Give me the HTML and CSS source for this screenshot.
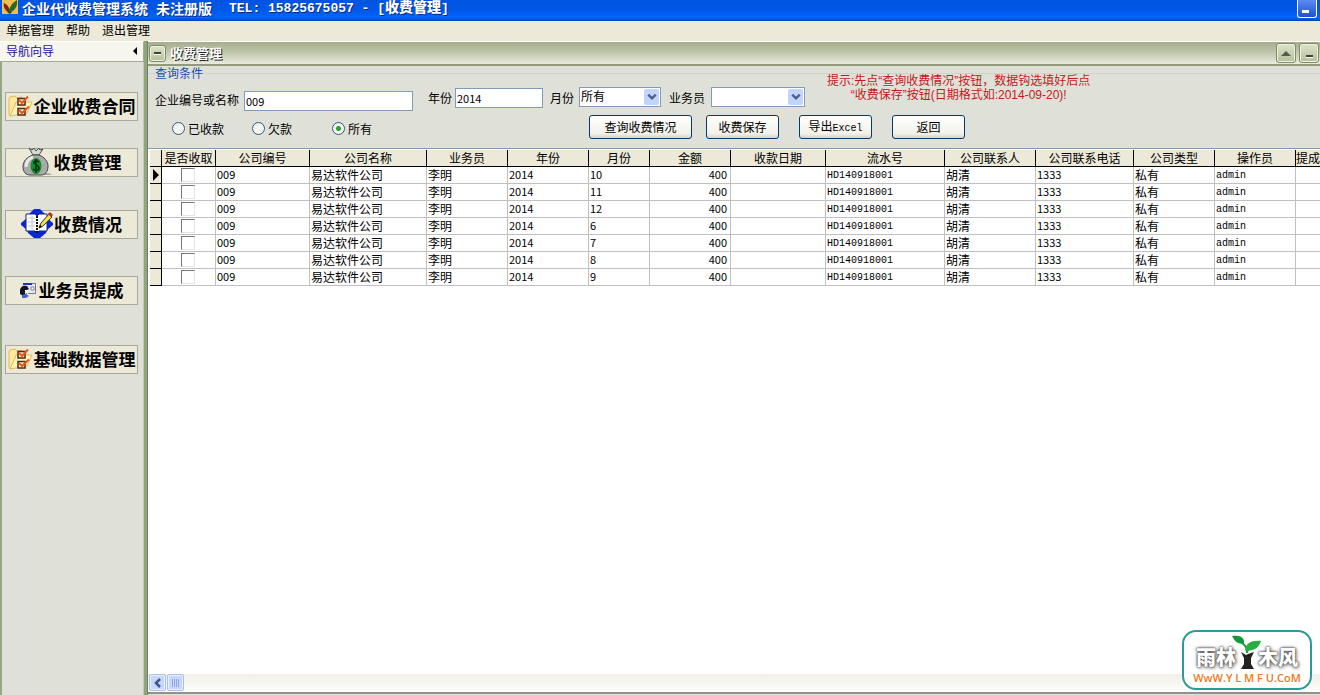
FILE: index.html
```html
<!DOCTYPE html>
<html lang="zh-CN">
<head>
<meta charset="utf-8">
<title>企业代收费管理系统</title>
<link rel="stylesheet" href="styles.css">
</head>
<body>
<svg class="defs" aria-hidden="true">
  <symbol id="folder" viewBox="0 0 25 24">
    <path d="M1 5l1-2 5-1 2 2 5-1v15L2 22l-1-2z" fill="#ffe9a0" stroke="#e6b84e"/>
    <path d="M2 22l5-11 1-3h16l-5 11z" fill="#fff3b8" stroke="#e6bc58"/>
    <path d="M10 4.500h7v6.500h-7zM10 14.500h7v6.500h-7z" fill="#fdeac0" stroke="#4a2c18" stroke-width="1.500"/>
    <path d="M11 6l3 3 6-6.500M11 16l3 3 7-6.500" fill="none" stroke="#e8581c" stroke-width="2"/>
  </symbol>
</svg>
<header class="titlebar">
  <svg class="app-icon" viewBox="0 0 16 16"><path d="M0 0h16v14H0z" fill="#efc050"/><path d="M8 13C3 11 1 7 2 3c4 2 6 5 6 10z" fill="#7a2a12"/><path d="M7 13C7 7 10 3 15 0c1 6-2 11-8 13z" fill="#2d6a20"/><path d="M5 12h5l-2 2z" fill="#2e3a10"/></svg>
  <h1 class="title"><span>企业代收费管理系统</span><span>未注册版</span><span class="tel">TEL: 15825675057 - [<b>收费管理</b>]</span></h1>
  <button class="win-min" aria-label="最小化"><i></i></button>
</header>
<nav class="menubar">
  <button>单据管理</button><button>帮助</button><button>退出管理</button>
</nav>
<div class="workspace">
  <aside class="sidebar">
    <div class="side-head"><span>导航向导</span><button aria-label="折叠"><svg width="4" height="8" viewBox="0 0 4 8"><path d="M4 0v8L0 4z"/></svg></button></div>
    <div class="side-items">
      <button class="nav"><svg width="25" height="24"><use href="#folder"/></svg>企业收费合同</button>
      <button class="nav money"><svg width="30" height="29" viewBox="0 0 30 29"><path d="M20 28l5-2 5 1-2 1z" fill="#aaa898"/><path d="M7 1l3 2 2-2 2 3 3-3 1 2 3-1-4 6h-6z" fill="#d5d8d4" stroke="#4b4f4b"/><path d="M11 8h6c5 2 9 6 9 11 0 6-3 9-7 9H8c-4 0-7-3-7-8 0-6 4-10 10-12z" fill="#a9aba8" stroke="#444"/><path d="M11 10c-5 2-7 6-7 10" fill="none" stroke="#e8e8e8" stroke-width="3"/><ellipse cx="14" cy="19" rx="5.500" ry="8" fill="#1c8c34"/><path d="M17 15c-2-2-6-1-5 1s5 2 5 5-4 3-6 1M14 12v14" fill="none" stroke="#04340e" stroke-width="1.500"/></svg>收费管理</button>
      <button class="nav status"><svg width="32" height="29" viewBox="0 0 32 29"><path d="M13 0h6l6 6 1 3 6 5v2l-6 5-1 3-6 5h-6l-6-5-1-3-6-5v-2l6-5 1-3z" fill="#0828d8"/><path d="M5 5h9l2 2 2-2h8v17h-8l-2 2-2-2H5z" fill="#fff" stroke="#1c2580"/><path d="M16 7v17" stroke="#111" stroke-width="2" stroke-dasharray="2 1"/><path d="M7 9h7M7 13h7M7 17h7M11 7v13" stroke="#c3cbd6"/><path d="M18 19l2-5 8-9 3 3-9 9z" fill="#ece04c" stroke="#333"/><path d="M18 19l1-3 2 2z"/><path d="M27 5l2-2 3 3-2 2z" fill="#c42828"/></svg>收费情况</button>
      <button class="nav staff"><svg width="17" height="16" viewBox="0 0 17 16"><path d="M5.500 1.500h10v10H8" fill="#e6e8f0" stroke="#777b8a"/><path d="M3 1h9v2H3z" fill="#1838c0"/><path d="M11 5h3v3h-3z" fill="#fff" stroke="#888"/><path d="M0 9c0-4 3-6 7-5l2 3-2 1v4l-4 2-3-2z" fill="#101525"/><path d="M5 8h3v3l-3 1z" fill="#f1f1f1"/><path d="M2 13l4-1 3 2-3 2H2z" fill="#4468c8"/></svg>业务员提成</button>
      <button class="nav base"><svg width="25" height="24"><use href="#folder"/></svg>基础数据管理</button>
    </div>
  </aside>
  <main class="panel">
    <div class="panel-head">
      <button class="pbtn small" aria-label="收起"><i></i></button>
      <h2>收费管理</h2>
      <button class="pbtn" aria-label="向上"><svg width="10" height="5" viewBox="0 0 10 5"><path d="M0 5l5-5 5 5z" fill="#565c4b"/></svg></button>
      <button class="pbtn low" aria-label="最小化"><i></i></button>
    </div>
    <fieldset class="query">
      <legend>查询条件</legend>
      <div class="filters">
        <label class="field key" for="key">企业编号或名称</label><input class="box key" id="key" value="009">
        <label class="field year" for="year">年份</label><input class="box year-box" id="year" value="2014">
        <label class="field month" for="month">月份</label>
        <span class="combo month-box"><select id="month"><option>所有</option></select><svg viewBox="0 0 15 17"><path d="M4 6l4 4 4-4" fill="none" stroke="#4d6185" stroke-width="2.500"/></svg></span>
        <label class="field staff-label" for="clerk">业务员</label>
        <span class="combo staff-box"><select id="clerk"><option></option></select><svg viewBox="0 0 15 17"><path d="M4 6l4 4 4-4" fill="none" stroke="#4d6185" stroke-width="2.500"/></svg></span>
        <p class="hint">提示:先点“查询收费情况”按钮，数据钩选填好后点<br>“收费保存”按钮(日期格式如:2014-09-20)!</p>
      </div>
      <div class="actions">
        <div class="radios">
          <label><input type="radio" name="pay">已收款</label>
          <label><input type="radio" name="pay">欠款</label>
          <label><input type="radio" name="pay" checked>所有</label>
        </div>
        <button class="btn wide">查询收费情况</button>
        <button class="btn save">收费保存</button>
        <button class="btn">导出<span class="mono">Excel</span></button>
        <button class="btn">返回</button>
      </div>
    </fieldset>
    <div class="grid-wrap">
      <table class="grid">
        <colgroup><col class="w12"><col class="w54"><col class="w94"><col class="w117"><col class="w81"><col class="w81"><col class="w61"><col class="w81"><col class="w95"><col class="w119"><col class="w91"><col class="w98"><col class="w81"><col class="w81"><col class="w81"></colgroup>
        <thead><tr><th></th><th>是否收取</th><th>公司编号</th><th>公司名称</th><th>业务员</th><th>年份</th><th>月份</th><th>金额</th><th>收款日期</th><th>流水号</th><th>公司联系人</th><th>公司联系电话</th><th>公司类型</th><th>操作员</th><th class="cut">提成</th></tr></thead>
        <tbody>
          <tr><th><svg width="6" height="12" viewBox="0 0 6 12"><path d="M0 0v12l6-6z"/></svg></th><td class="chk"><input type="checkbox" aria-label="收取"></td><td class="num">009</td><td>易达软件公司</td><td>李明</td><td class="num">2014</td><td class="num">10</td><td class="num right">400</td><td></td><td class="mono">HD140918001</td><td>胡清</td><td class="num">1333</td><td>私有</td><td class="mono">admin</td><td></td></tr>
          <tr><th></th><td class="chk"><input type="checkbox" aria-label="收取"></td><td class="num">009</td><td>易达软件公司</td><td>李明</td><td class="num">2014</td><td class="num">11</td><td class="num right">400</td><td></td><td class="mono">HD140918001</td><td>胡清</td><td class="num">1333</td><td>私有</td><td class="mono">admin</td><td></td></tr>
          <tr><th></th><td class="chk"><input type="checkbox" aria-label="收取"></td><td class="num">009</td><td>易达软件公司</td><td>李明</td><td class="num">2014</td><td class="num">12</td><td class="num right">400</td><td></td><td class="mono">HD140918001</td><td>胡清</td><td class="num">1333</td><td>私有</td><td class="mono">admin</td><td></td></tr>
          <tr><th></th><td class="chk"><input type="checkbox" aria-label="收取"></td><td class="num">009</td><td>易达软件公司</td><td>李明</td><td class="num">2014</td><td class="num">6</td><td class="num right">400</td><td></td><td class="mono">HD140918001</td><td>胡清</td><td class="num">1333</td><td>私有</td><td class="mono">admin</td><td></td></tr>
          <tr><th></th><td class="chk"><input type="checkbox" aria-label="收取"></td><td class="num">009</td><td>易达软件公司</td><td>李明</td><td class="num">2014</td><td class="num">7</td><td class="num right">400</td><td></td><td class="mono">HD140918001</td><td>胡清</td><td class="num">1333</td><td>私有</td><td class="mono">admin</td><td></td></tr>
          <tr><th></th><td class="chk"><input type="checkbox" aria-label="收取"></td><td class="num">009</td><td>易达软件公司</td><td>李明</td><td class="num">2014</td><td class="num">8</td><td class="num right">400</td><td></td><td class="mono">HD140918001</td><td>胡清</td><td class="num">1333</td><td>私有</td><td class="mono">admin</td><td></td></tr>
          <tr><th></th><td class="chk"><input type="checkbox" aria-label="收取"></td><td class="num">009</td><td>易达软件公司</td><td>李明</td><td class="num">2014</td><td class="num">9</td><td class="num right">400</td><td></td><td class="mono">HD140918001</td><td>胡清</td><td class="num">1333</td><td>私有</td><td class="mono">admin</td><td></td></tr>
        </tbody>
      </table>
    </div>
    <div class="scrollbar">
      <button aria-label="向左滚动"><svg width="8" height="10" viewBox="0 0 8 10"><path d="M6 1L2 5l4 4" fill="none" stroke="#3f5687" stroke-width="2.500"/></svg></button>
      <button aria-label="滚动条"><svg width="9" height="8" viewBox="0 0 9 8"><path d="M1.500 0v8M3.500 0v8M5.500 0v8M7.500 0v8" stroke="#8fa9e0"/></svg></button>
    </div>
  </main>
</div>
<div class="mark">
  <div class="mark-name"><span>雨林</span><svg width="22" height="36" viewBox="3 0 22 36"><path d="M8 18l5 3 2-1 6-2-3 6v6l3 5H8l3-5v-6z" fill="#222"/><path d="M14 19c0-5-1-7-5-10M14 19c0-4 3-6 8-8" fill="none" stroke="#1f9a38" stroke-width="2"/><path d="M-1 2c8-1 13 1 12 8C5 10 2 8-1 2z" fill="#14983c"/><path d="M12 16c1-7 7-10 16-9-2 7-8 11-16 9z" fill="#2aae44"/></svg><span>木风</span></div>
  <div class="mark-url">WwW.Y L M F U.CoM</div>
</div>
</body>
</html>
```
FILE: styles.css
```css
* { box-sizing: border-box; }
body { margin: 0; height: 100vh; display: flex; flex-direction: column; overflow: hidden; background: #dfe0d8; color: #000; font: 12px/14px "Noto Sans CJK SC", sans-serif; }
button, input, select { font: inherit; color: inherit; margin: 0; padding: 0; }
button { border: 0; background: none; }
h1, h2, p { margin: 0; }
svg { display: block; flex: none; }
.defs { position: absolute; width: 0; height: 0; }
.mono { font-family: "Liberation Mono", monospace; font-size: 10px; }

.titlebar { display: flex; align-items: flex-start; height: 21px; flex: none; padding: 0 3px 0 2px; background: linear-gradient(#0055e0, #0058e8 50%, #0066ff 85%, #0040b8); }
.app-icon { width: 16px; height: 16px; margin-right: 4px; }
.title { flex: 1; display: flex; gap: 8px; white-space: pre; color: #fff; font-size: 14px; line-height: 16px; font-weight: 700; text-shadow: 1px 1px #0a2a80; }
.title .tel { margin-left: 9px; font-family: "Liberation Mono", "Noto Sans CJK SC", monospace; font-size: 13px; }
.title b { font-size: 14px; }
.win-min { display: flex; align-items: flex-end; width: 20px; height: 18px; padding: 0 0 4px 4px; border: 1px solid #fff; border-top: 0; border-radius: 0 0 3px 3px; background: linear-gradient(#5c8cf0, #2050d0); }
.win-min i { width: 7px; height: 3px; background: #fff; }

.menubar { display: flex; gap: 12px; flex: none; height: 20px; padding: 0 6px; background: #ece9d8; }
.menubar button { height: 18px; }

.workspace { flex: 1; min-height: 0; display: flex; }
.sidebar { width: 147px; flex: none; display: flex; flex-direction: column; border-right: 3px solid #8fa57c; }
.side-head { display: flex; align-items: center; justify-content: space-between; height: 21px; padding: 0 6px 2px; color: #1c10a8; background: #f6f5ee; border-top: 1px solid #fff; border-right: 1px solid #a6aa94; border-bottom: 1px solid #a6aa94; }
.side-items { flex: 1; display: flex; flex-direction: column; padding: 30px 6px 0 3px; border-left: 2px solid #93a783; border-right: 1px solid #c4cab8; }
.nav { display: flex; align-items: center; justify-content: center; gap: 1px; width: 133px; height: 29px; padding-bottom: 2px; background: #ece9d8; border: 1px solid #aca899; font-size: 17px; line-height: 20px; font-weight: 700; white-space: nowrap; }
.money { margin-top: 27px; gap: 2px; }
.status { margin-top: 33px; }
.staff { margin-top: 37px; gap: 2px; }
.base { margin-top: 40px; }

.panel { flex: 1; min-width: 0; display: flex; flex-direction: column; border-left: 1px solid #708060; }
.panel-head { display: flex; align-items: center; height: 25px; flex: none; padding: 0 1px; gap: 3px; border-top: 1px solid #fff; border-bottom: 2px solid #929a7c; background: linear-gradient(#a6ad8c, #bcc2a6 40%, #e8ebdc); }
.panel-head h2 { flex: 1; color: #fff; font-size: 13px; line-height: 18px; font-weight: 700; text-shadow: 1px 1px #222; }
.pbtn { display: flex; align-items: center; justify-content: center; width: 20px; height: 20px; border: 1px solid #7f8c66; border-radius: 3px; background: linear-gradient(#dde3cc, #b5c09a); box-shadow: inset 0 0 0 1px #eef1e2; }
.pbtn i { width: 7px; height: 3px; background: #3c4232; border-bottom: 1px solid #fff; }
.small { width: 17px; height: 17px; margin-right: 1px; }
.low { align-items: flex-end; padding-bottom: 4px; }

.query { flex: none; min-width: 0; margin: 0; padding: 0 0 9px 7px; border: 0; border-top: 1px solid #d0d2cc; }
.query legend { padding: 0; color: #1850b0; }
.filters { display: flex; align-items: flex-start; height: 36px; margin-top: -7px; white-space: nowrap; }
.field { margin-top: 18px; }
.field.key { margin-top: 20px; width: 89px; }
.field.year { margin-left: 15px; width: 27px; }
.field.month { margin-left: 7px; width: 29px; }
.field.staff-label { margin-left: 8px; width: 42px; }
.box { height: 20px; margin-top: 15px; padding: 0 1px; border: 1px solid #7f9db9; border-radius: 0; background: #fff; font-size: 11px; }
.box.key { width: 169px; margin-top: 18px; }
.year-box { width: 88px; }
.combo { position: relative; margin-top: 14px; height: 20px; }
.combo select { width: 100%; height: 20px; padding: 0 1px 2px; appearance: none; border: 1px solid #7f9db9; border-radius: 0; background: #fff; }
.combo svg { position: absolute; top: 2px; right: 2px; width: 15px; height: 16px; background: #c2d3fc; border-radius: 2px; pointer-events: none; }
.month-box { width: 82px; }
.staff-box { width: 94px; }
.hint { margin-top: 1px; margin-left: 22px; color: #c81818; text-align: center; font-family: "DejaVu Sans", "Noto Sans CJK SC", sans-serif; font-family: "Liberation Sans", "Noto Sans CJK SC", sans-serif; }

.actions { display: flex; align-items: center; margin-top: 6px; padding-left: 17px; white-space: nowrap; }
.radios { display: grid; grid-template-columns: 80px 80px 80px; width: 417px; }
.radios label { display: flex; align-items: center; gap: 3px; padding-top: 3px; }
.radios input { appearance: none; width: 13px; height: 13px; border: 1px solid #2c5a80; border-radius: 50%; background: #f4f4f0; }
.radios input:checked { background: radial-gradient(#2ca02c 0 2px, #f4f4f0 3px); }
.btn { width: 73px; height: 24px; margin-left: 20px; border: 1px solid #003c74; border-radius: 3px; background: linear-gradient(#fff, #f2f1ea 80%, #d8d2c4); }
.btn.wide { width: 103px; margin-left: 0; }
.btn.save { margin-left: 14px; }

.grid-wrap { flex: 1; min-height: 0; overflow: hidden; padding: 1px 0 0 2px; background: #fff; border-top: 1px solid #7f9db9; }
.grid { table-layout: fixed; width: 1227px; border-collapse: separate; border-spacing: 0; }
.w12 { width: 12px; } .w54 { width: 54px; } .w61 { width: 61px; } .w81 { width: 81px; } .w91 { width: 91px; }
.w94 { width: 94px; } .w95 { width: 95px; } .w98 { width: 98px; } .w117 { width: 117px; } .w119 { width: 119px; }
.grid th, .grid td { height: 17px; padding: 0 0 1px 1px; line-height: 15px; vertical-align: middle; overflow: hidden; white-space: nowrap; }
.grid th { padding: 0 0 1px; font-weight: 400; background: #ece9d8; border-right: 1px solid #000; border-bottom: 1px solid #000; }
.grid .cut { text-align: left; }
.grid td { border-right: 1px solid #c0c0c0; border-bottom: 1px solid #c0c0c0; }
.grid th svg { margin-left: 3px; }
.grid .num { font-size: 11px; }
.grid td.mono { padding: 1px 0 0 1px; }
.grid .right { text-align: right; padding-right: 3px; }
.grid .chk { padding: 0 0 0 19px; }
.chk input { display: block; appearance: none; width: 14px; height: 14px; border: 1px solid #e4e4e4; border-top: 1px solid #777; border-left: 1px solid #777; }

.scrollbar { display: flex; gap: 1px; flex: none; height: 21px; padding: 0 1px 3px; background: linear-gradient(#f0efe8, #fdfdfa 85%, #909090 86%, #909090 94%, #dfe0d8 95%); }
.scrollbar button { display: flex; align-items: center; justify-content: center; width: 17px; height: 17px; border: 1px solid #a9bfee; border-radius: 2px; background: #c6d6fc; box-shadow: inset 0 0 0 1px #e8f0ff; }

.mark { position: absolute; right: 8px; bottom: 5px; width: 130px; height: 60px; border: 2px solid #2a9c98; border-radius: 14px; background: #fff; text-align: center; }
.mark-name { display: flex; align-items: flex-end; justify-content: center; height: 38px; color: #fff; font-size: 20px; line-height: 26px; font-weight: 900; text-shadow: 0 0 2px #444, 0 0 3px #666, 1px 1px 4px #777; }
.mark-name svg { overflow: visible; }
.mark-url { color: #f07820; font: 600 11px/16px "Open Sans", sans-serif; white-space: nowrap; }
```
